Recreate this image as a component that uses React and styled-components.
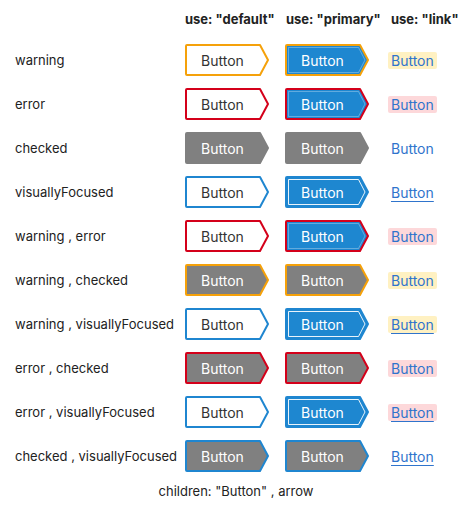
import React from "react";
import styled, { createGlobalStyle } from "styled-components";

const Global = createGlobalStyle`
  html, body { margin: 0; padding: 0; background: #fff; }
  body { font-family: Inter, "Noto Sans", sans-serif; color: #222; }
`;

const Page = styled.div`
  width: 470px;
  padding: 0 0 0 15px;
  box-sizing: border-box;
`;

const Grid = styled.div`
  display: grid;
  grid-template-columns: 170px 100px 103px 1fr;
`;

const Head = styled.div`
  height: 38px;
  display: flex;
  align-items: center;
  padding-left: ${(p) => p.$pad || 0}px;
  font-size: 13px;
  font-weight: 700;
  color: #222;
  white-space: nowrap;
`;

const Label = styled.div`
  height: 44px;
  display: flex;
  align-items: center;
  font-size: 13px;
  color: #222;
  white-space: nowrap;
`;

const Cell = styled.div`
  height: 44px;
  display: flex;
  align-items: center;
`;

const Footer = styled.div`
  height: 26px;
  display: flex;
  align-items: center;
  justify-content: center;
  font-size: 13px;
  color: #222;
  padding-right: 13px;
`;

const ArrowBtn = styled.div`
  position: relative;
  width: 84px;
  height: 32px;
  display: flex;
  align-items: center;
  justify-content: center;
  box-sizing: border-box;
  padding-right: 9px;
  font-size: 14px;
  color: ${(p) => (p.$light ? "#fff" : "#333")};
`;

const Shape = styled.svg`
  position: absolute;
  inset: 0;
  overflow: visible;
`;

const Text = styled.span`
  position: relative;
`;

const LinkBtn = styled.span`
  font-size: 14px;
  color: #2f74cc;
  padding: 1px 3px;
  border-radius: 2px;
  line-height: 15px;
  background: ${(p) => p.$bg || "transparent"};
  text-decoration: ${(p) => (p.$focus ? "underline" : "none")};
  text-underline-offset: 3px;
`;

const C = {
  warning: "#f5a10a",
  error: "#d4001a",
  focus: "#1f86d0",
  blue: "#1e87d0",
  gray: "#808080",
};

const outer = "M2,1 H75 L83,16 L75,31 H2 Q1,31 1,30 V2 Q1,1 2,1 Z";
const inner = "M3.5,3.5 H73.5 L80,16 L73.5,28.5 H3.5 Z";

function Arrow({ use, s }) {
  const checked = s.includes("checked");
  const focused = s.includes("visuallyFocused");
  const fill = checked ? C.gray : use === "primary" ? C.blue : "#fff";
  let stroke = null;
  if (focused) stroke = C.focus;
  else if (s.includes("error")) stroke = C.error;
  else if (s.includes("warning")) stroke = C.warning;
  const innerLine = use === "primary" && !checked && stroke;
  return (
    <ArrowBtn $light={checked || use === "primary"}>
      <Shape width="84" height="32" viewBox="0 0 84 32">
        <path
          d={outer}
          fill={fill}
          stroke={stroke || fill}
          strokeWidth="2"
          strokeLinejoin="round"
        />
        {innerLine && (
          <path
            d={inner}
            fill="none"
            stroke="#fff"
            strokeOpacity={focused ? 0.9 : 0.3}
            strokeWidth="1"
          />
        )}
      </Shape>
      <Text>Button</Text>
    </ArrowBtn>
  );
}

function Link({ s }) {
  let bg = null;
  if (s.includes("error")) bg = "#fdd8da";
  else if (s.includes("warning")) bg = "#fff1c2";
  return (
    <LinkBtn $bg={bg} $focus={s.includes("visuallyFocused")}>
      Button
    </LinkBtn>
  );
}

const rows = [
  ["warning"],
  ["error"],
  ["checked"],
  ["visuallyFocused"],
  ["warning", "error"],
  ["warning", "checked"],
  ["warning", "visuallyFocused"],
  ["error", "checked"],
  ["error", "visuallyFocused"],
  ["checked", "visuallyFocused"],
];

export default function App() {
  return (
    <Page>
      <Global />
      <Grid>
        <Head />
        <Head>use: "default"</Head>
        <Head $pad={1}>use: "primary"</Head>
        <Head $pad={3}>use: "link"</Head>
        {rows.map((s) => (
          <React.Fragment key={s.join()}>
            <Label>{s.join(" , ")}</Label>
            <Cell>
              <Arrow use="default" s={s} />
            </Cell>
            <Cell>
              <Arrow use="primary" s={s} />
            </Cell>
            <Cell>
              <Link s={s} />
            </Cell>
          </React.Fragment>
        ))}
      </Grid>
      <Footer>children: "Button" , arrow</Footer>
    </Page>
  );
}
